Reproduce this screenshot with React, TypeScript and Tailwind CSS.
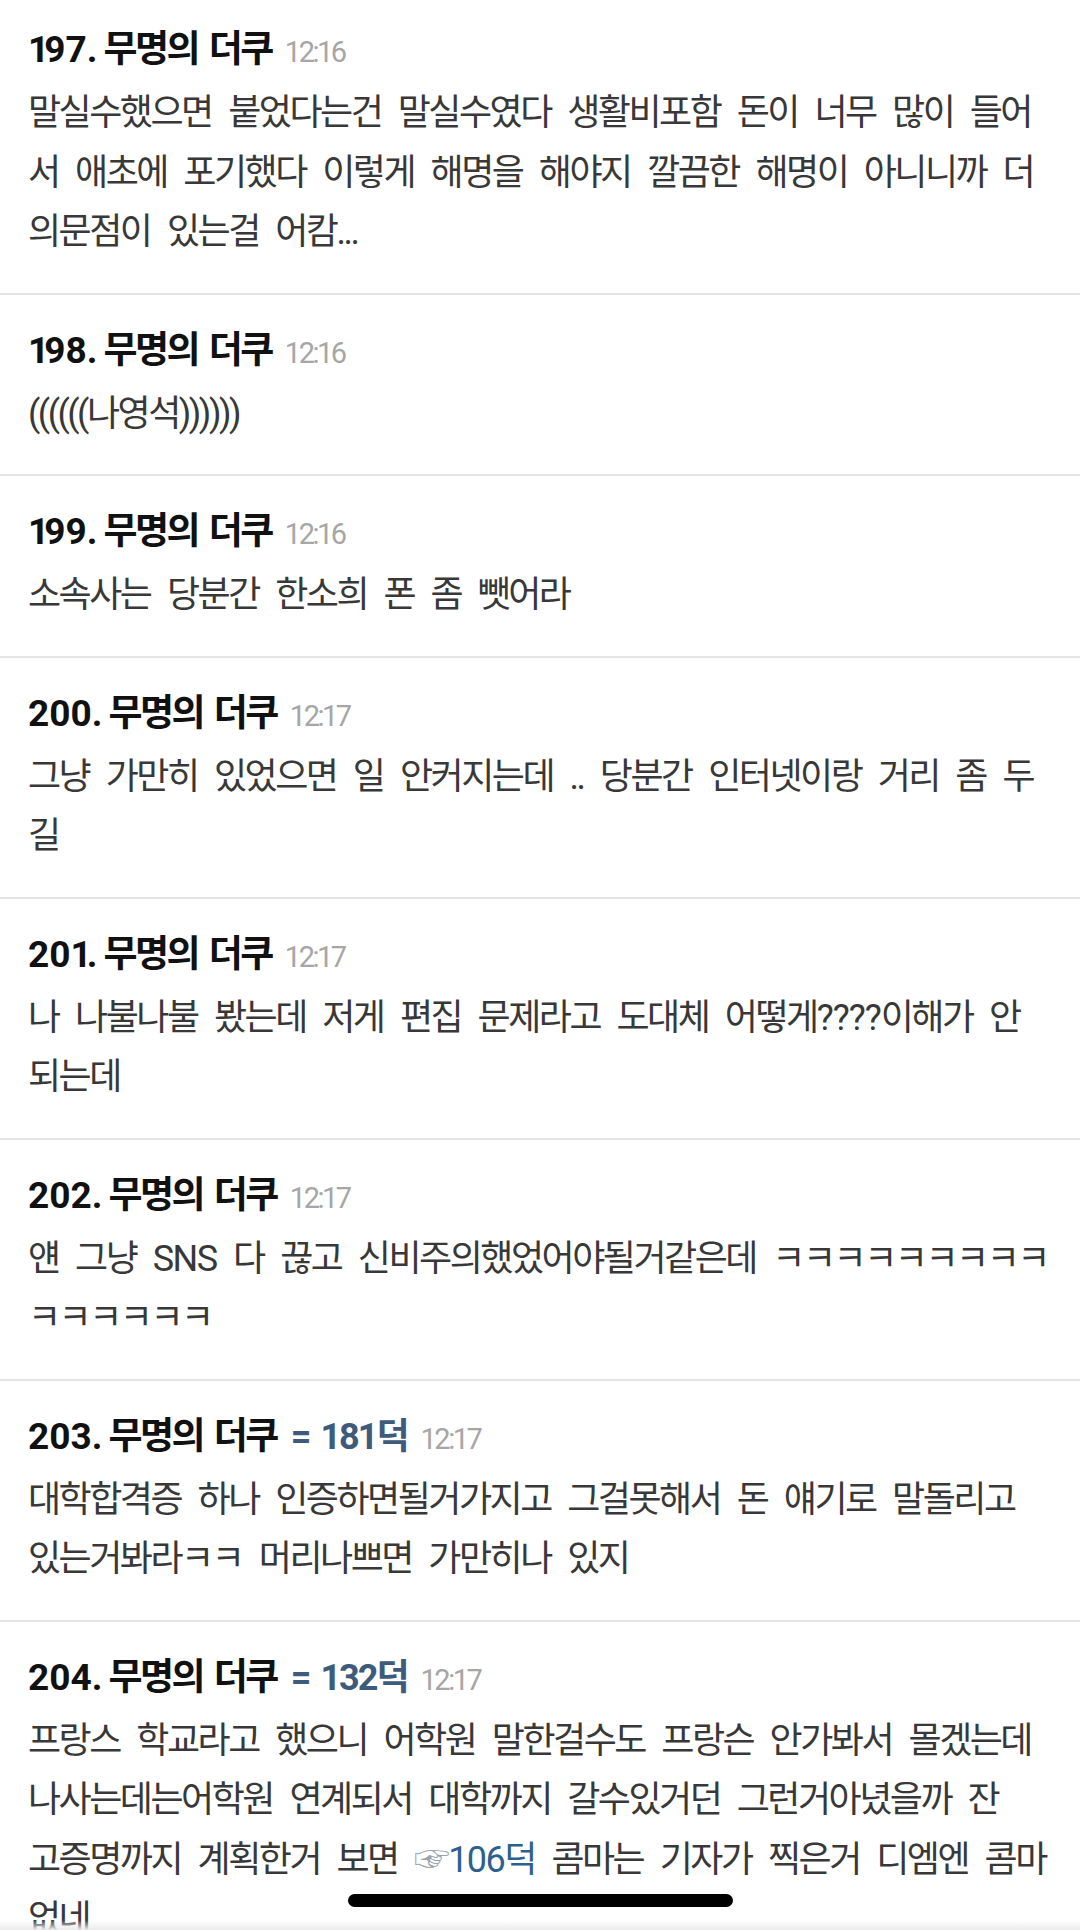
import React from "react";

type Post = {
  no: number;
  ref?: string;
  time: string;
  lines: React.ReactNode[];
};

const posts: Post[] = [
  {
    no: 197,
    time: "12:16",
    lines: [
      "말실수했으면 붙었다는건 말실수였다 생활비포함 돈이 너무 많이 들어",
      "서 애초에 포기했다 이렇게 해명을 해야지 깔끔한 해명이 아니니까 더",
      "의문점이 있는걸 어캄...",
    ],
  },
  { no: 198, time: "12:16", lines: ["((((((나영석))))))"] },
  { no: 199, time: "12:16", lines: ["소속사는 당분간 한소희 폰 좀 뺏어라"] },
  {
    no: 200,
    time: "12:17",
    lines: ["그냥 가만히 있었으면 일 안커지는데 .. 당분간 인터넷이랑 거리 좀 두", "길"],
  },
  {
    no: 201,
    time: "12:17",
    lines: [
      <>
        나 나불나불 봤는데 저게 편집 문제라고 도대체 어떻게
        <span className="tracking-[-1px]">????</span>이해가 안
      </>,
      "되는데",
    ],
  },
  {
    no: 202,
    time: "12:17",
    lines: [
      <>
        얜 그냥 <span className="tracking-[-1.5px]">SNS</span> 다 끊고 신비주의했었어야될거같은데 ㅋㅋㅋㅋㅋㅋㅋㅋㅋ
      </>,
      "ㅋㅋㅋㅋㅋㅋ",
    ],
  },
  {
    no: 203,
    ref: "181덕",
    time: "12:17",
    lines: [
      "대학합격증 하나 인증하면될거가지고 그걸못해서 돈 얘기로 말돌리고",
      "있는거봐라ㅋㅋ 머리나쁘면 가만히나 있지",
    ],
  },
  {
    no: 204,
    ref: "132덕",
    time: "12:17",
    lines: [
      "프랑스 학교라고 했으니 어학원 말한걸수도 프랑슨 안가봐서 몰겠는데",
      "나사는데는어학원 연계되서 대학까지 갈수있거던 그런거아녔을까 잔",
      <>
        고증명까지 계획한거 보면 <span className="text-[#9aa3ad] tracking-[-2px]">☞</span>
        <span className="text-[#2f5f8f] tracking-[-1.5px]">106</span>
        <span className="text-[#2f5f8f]">덕</span> 콤마는 기자가 찍은거 디엠엔 콤마
      </>,
      "없네",
    ],
  },
];

const FONT = "font-['Roboto','Noto_Sans_CJK_KR',sans-serif]";

function Num({ value }: { value: string }) {
  return (
    <>
      {value.split("").map((c, i) =>
        c === "1" ? (
          <span key={i} className="tracking-[-5px]">
            1
          </span>
        ) : (
          <span key={i}>{c}</span>
        )
      )}
    </>
  );
}

function PostItem({ post, first }: { post: Post; first: boolean }) {
  return (
    <div
      className={`border-b-2 border-[#e4e4e4] px-[28px] ${first ? "pt-[26px]" : "pt-[32px]"} pb-[30px]`}
    >
      <div className="flex h-[48px] items-baseline whitespace-nowrap leading-[48px]">
        <span className="text-[37px] font-bold tracking-[0px] text-[#111111]">
          <Num value={`${post.no}.`} />
        </span>
        <span className="ml-[6px] text-[37px] font-bold tracking-[-2.5px] [word-spacing:4px] text-[#111111]">
          무명의 더쿠
        </span>
        {post.ref && (
          <span className="ml-[14px] text-[36px] font-bold tracking-[-2px] [word-spacing:4px] text-[#3e5b7c]">
            = {post.ref}
          </span>
        )}
        <span className="ml-[13px] text-[29px] tracking-[-2.5px] text-[#a6a6a6]">{post.time}</span>
      </div>
      <div className="mt-[10px] text-[36px] tracking-[-2.5px] [word-spacing:10px] text-[#383838] leading-[59.5px]">
        {post.lines.map((l, i) => (
          <div key={i} className="whitespace-nowrap">
            {l}
          </div>
        ))}
      </div>
    </div>
  );
}

export default function App() {
  return (
    <div className={`relative h-[1930px] w-[1080px] overflow-hidden bg-white ${FONT}`}>
      {posts.map((p, i) => (
        <PostItem key={p.no} post={p} first={i === 0} />
      ))}
      <div className="pointer-events-none absolute bottom-0 left-0 h-[10px] w-full bg-gradient-to-b from-transparent to-[#ececec]" />
      <div className="absolute left-[348px] top-[1894px] h-[13px] w-[385px] rounded-full bg-black" />
    </div>
  );
}
